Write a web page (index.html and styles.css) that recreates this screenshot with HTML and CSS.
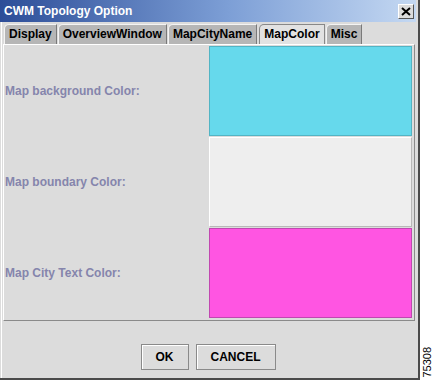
FILE: index.html
```html
<!DOCTYPE html>
<html lang="en">
<head>
    <meta charset="UTF-8">
    <title>CWM Topology Option</title>
    <link rel="stylesheet" href="styles.css">
</head>
<body>
    <div class="page">
        <div class="window">
            <div class="titlebar">
                <span class="title">CWM Topology Option</span>
                <button class="close" aria-label="Close">
                    <svg width="10" height="9" viewBox="0 0 10 9">
                        <path d="M1 1 L9 8 M9 1 L1 8" stroke="#000" stroke-width="2" fill="none"/>
                    </svg>
                </button>
            </div>

            <div class="tabs">
                <div class="tab">Display</div>
                <div class="tab">OverviewWindow</div>
                <div class="tab">MapCityName</div>
                <div class="tab active">MapColor</div>
                <div class="tab">Misc</div>
            </div>

            <div class="panel">
                <div class="row">
                    <span class="label">Map background Color:</span>
                    <div class="swatch cyan"></div>
                </div>
                <div class="row">
                    <span class="label">Map boundary Color:</span>
                    <div class="swatch white"></div>
                </div>
                <div class="row">
                    <span class="label">Map City Text Color:</span>
                    <div class="swatch magenta"></div>
                </div>
            </div>

            <div class="buttons">
                <button class="btn ok">OK</button>
                <button class="btn cancel">CANCEL</button>
            </div>
        </div>
        <div class="side">
            <span class="figure-id">75308</span>
        </div>
    </div>
</body>
</html>
```

FILE: styles.css
```css
:root {
    --face: #dcdcdc;
    --shadow: #8a8a8a;
    --dark: #4a4a4a;
    --label: #8585ac;
}

* {
    margin: 0;
    padding: 0;
    box-sizing: border-box;
}

body {
    background: #ffffff;
    font-family: "Liberation Sans", Arial, sans-serif;
    font-size: 12px;
}

.page {
    display: flex;
    width: 434px;
    height: 380px;
}

.window {
    width: 420px;
    height: 380px;
    background: var(--face);
    border-right: 2px solid var(--dark);
    border-bottom: 2px solid var(--dark);
    box-shadow: inset 1px 0 0 var(--face), inset 2px 0 0 #fff;
    display: flex;
    flex-direction: column;
}

/* title bar */
.titlebar {
    height: 22px;
    margin-right: 2px;
    background: linear-gradient(to right, #2c4d98 0%, #7d9fd6 55%, #c4d8f2 100%);
    display: flex;
    align-items: center;
    justify-content: space-between;
    padding: 0 2px 0 4px;
}

.title {
    color: #ffffff;
    font-weight: bold;
    font-size: 12px;
}

.close {
    width: 16px;
    height: 15px;
    background: var(--face);
    border: 1px solid;
    border-color: #ffffff #555 #555 #ffffff;
    display: flex;
    align-items: center;
    justify-content: center;
}

/* tabs */
.tabs {
    display: flex;
    margin-top: 2px;
    padding-left: 4px;
    height: 20px;
    align-items: flex-end;
    gap: 1px;
}

.tab {
    height: 20px;
    padding: 0 4px;
    background: #b6b6b6;
    border: 1px solid;
    border-color: #f4f4f4 #7a7a7a transparent #f4f4f4;
    border-bottom: none;
    border-top-left-radius: 5px;
    font-weight: bold;
    color: #000;
    line-height: 19px;
}

.tab.active {
    background: #e2e2e2;
    border-color: #888 #888 transparent #888;
    margin-left: 1px;
}

/* content panel */
.panel {
    height: 277px;
    margin: 0 3px 0 3px;
    border: 1px solid;
    border-color: #ffffff var(--shadow) var(--shadow) #ffffff;
    padding: 1px 2px 0 1px;
    display: flex;
    flex-direction: column;
    gap: 1px;
}

.row {
    height: 90px;
    display: flex;
    align-items: center;
    justify-content: space-between;
}

.label {
    color: var(--label);
    font-weight: bold;
}

.swatch {
    width: 203px;
    height: 90px;
    border: 1px solid;
}

.cyan {
    background: #66d9ec;
    border-color: #52b4c4;
}

.white {
    background: #eeeeee;
    border-color: #ffffff #b8b8b8 #b8b8b8 #ffffff;
}

.magenta {
    background: #ff55e2;
    border-color: #c048b0;
}

/* bottom buttons */
.buttons {
    flex: 1;
    display: flex;
    justify-content: center;
    gap: 7px;
    padding-top: 23px;
    padding-right: 2px;
}

.btn {
    height: 26px;
    background: var(--face);
    border: 1px solid var(--shadow);
    box-shadow: inset 1px 1px 0 #ffffff;
    font-family: "Liberation Sans", Arial, sans-serif;
    font-weight: bold;
    font-size: 12px;
    color: #000;
}

.ok {
    width: 48px;
}

.cancel {
    width: 80px;
}

/* side annotation */
.side {
    flex: 1;
    display: flex;
    align-items: flex-end;
    justify-content: center;
    padding-bottom: 2px;
}

.figure-id {
    writing-mode: vertical-rl;
    transform: rotate(180deg);
    font-family: "Liberation Sans", Arial, sans-serif;
    font-size: 11px;
    color: #000;
}
```
